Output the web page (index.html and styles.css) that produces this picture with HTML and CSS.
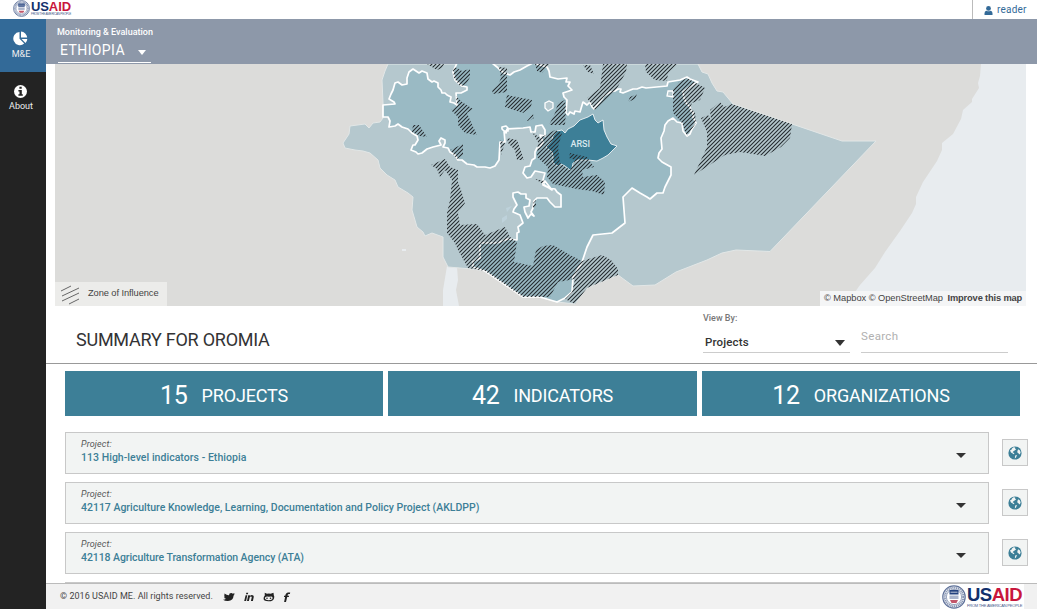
FILE: index.html
```html
<!DOCTYPE html>
<html lang="en">
<head>
<meta charset="utf-8">
<title>USAID Monitoring &amp; Evaluation</title>
<link rel="stylesheet" href="styles.css">
</head>
<body>
<svg class="defs" width="0" height="0" aria-hidden="true">
  <symbol id="globe" viewBox="0 0 14 14">
    <circle cx="7" cy="7" r="6.600" fill="#3d7f97"/>
    <path fill="#f2f4f3" d="M5.600 1.300 7.200 1.500 7 2.600 8.200 3.200 6.600 4.600 5.200 5.400 4.600 6.300 6.500 7.200 5.500 8.300 4.300 7.200 3 6.600 2 4.600 3.600 3.600 4.200 2.200zM10.200 3.200 12 4.400 12.600 6.400 11.800 8.600 10.600 7.400 9.200 6.200 9.600 4.600zM7.200 9.400 9 9 8 11.400 6.800 12.400z"/>
  </symbol>
  <symbol id="seal" viewBox="0 0 24 24">
    <circle cx="12" cy="12" r="11.200" fill="#eef1f6" stroke="#5f7199" stroke-width="1.200"/>
    <circle cx="12" cy="12" r="9.300" fill="none" stroke="#8795b3" stroke-width="2" stroke-dasharray="1.2 .7"/>
    <circle cx="12" cy="12" r="7.600" fill="#fff" stroke="#5f7199" stroke-width=".6"/>
    <path fill="#23427e" d="M7.500 5h9v4.500h-9z"/>
    <path fill="#a9b4cb" d="M7.500 10.500h9v3.500h-9z"/>
    <path fill="#c2566a" d="M8 15h8l-1.500 3h-5z"/>
    <path stroke="#fff" stroke-width=".7" d="M8.500 7.200h7"/>
  </symbol>
</svg>

<header class="topbar">
  <div class="logo logo-top">
    <svg class="logo-seal"><use href="#seal"/></svg>
    <div class="logo-words"><b class="logo-name">US<i>AID</i></b><span class="logo-tag">FROM THE AMERICAN PEOPLE</span></div>
  </div>
  <a class="user">
    <svg class="user-icon" viewBox="0 0 8 9"><circle cx="4" cy="2.400" r="2.400"/><path d="M0 9V7.200Q0 5 2 4.700q2 1.200 4 0 2 .3 2 2.500V9z"/></svg>
    <span class="user-name">reader</span>
  </a>
</header>

<div class="shell">
  <nav class="sidebar">
    <a class="nav-item nav-active">
      <svg class="nav-icon" viewBox="0 0 15 15"><path d="M6.500 1v6.800l4.700 4.800A6.600 6.600 0 1 1 6.500 1z"/><path d="M8 .6a6.500 6.500 0 0 1 6.200 6H8zM8.600 8h5.700a6.500 6.500 0 0 1-1.800 4z"/></svg>
      <span>M&amp;E</span>
    </a>
    <a class="nav-item">
      <svg class="nav-icon" viewBox="0 0 15 15"><circle cx="7.500" cy="7.500" r="6.500"/><path fill="#232323" d="M6.400 2.700h2.300v2H6.400zM5.400 6h3.400v4.200h1v1.600H5.400v-1.600h1.100V7.600H5.400z"/></svg>
      <span>About</span>
    </a>
  </nav>

  <main class="main">
    <div class="country-bar">
      <div class="crumb">Monitoring &amp; Evaluation</div>
      <div class="country"><span class="country-name">ETHIOPIA</span><i class="caret caret-white"></i></div>
    </div>

    <section class="map">
      <svg class="map-art" viewBox="55 64 971 242">
        <defs>
          <pattern id="hatch" width="4" height="4" patternUnits="userSpaceOnUse">
            <path d="M-1 1 1-1M-1 5 5-1M3 5 5 3" stroke="#252c30" stroke-width="1.100"/>
          </pattern>
        </defs>
        <path fill="#dcdcda" d="M55 64h971v242H55z"/>
        <path fill="#e8ecef" d="M981 64 980 76 978 83 979 88 972 99 972 102 963 110 961 119 953 134 942 143 942 150 937 161 923 182 916 197 916 204 912 213 900 231 885 252 875 268 860 285 845 306H1026V64z"/>
        <path fill="#e8ecef" d="M447 266 457 267 458 280 456 290 459 306 443 306 443 290zM402 249h4v2h-4z"/>
        <path fill="#b5c8ce" stroke="#e2e7e7" d="M388 64 385 71 382 80 383 103 383 118 380 122 373 123 369 128 365 124 350 126 349 134 343 143 345 148 355 150 363 151 370 153 378 160 380 168 387 175 395 180 398 187 408 193 413 197 412 210 417 227 423 232 425 236 432 233 443 237 443 257 448 267 472 269 485 271 523 297 540 297 557 302 575 304 587 288 618 275 633 286 655 285 676 272 707 260 722 253 736 250 770 251.500 876 141 842 141 792 124 733 104 723 92 717 91 712 83 708 74 702 72 698 64z"/>
        <path class="oromia" d="M383 105 395 104 394 102 389 99 391 94 393 90 395 83 398 82 402 85 407 84 407 78 409 72 413 69 419 73 422 71 427 73 428 79 432 82 434 81 438 83 438 87 441 90 442 93 445 93 447 95 451 97 450 102 454 103 457 105 456 93 461 93 467 90 467 87 462 86 455 80 453 72 457 63 492 63 497 67 500 70 504 73 510 75 514 72 520 70 527 66 533 63 547 67 549 71 550 77 558 79 567 78 566 82 570 82 568 86 572 90 563 93 564 97 567 100 566 113 568 115 570 112 574 114 575 111 580 112 583 102 587 105 590 102 592 107 594 109 598 104 602 99 604 96 610 92 615 91 618 89 621 89 620 92 623 93 628 91 633 89 637 89 642 87 646 88 667 86 668 82 680 80 687 77 690 79 698 82 692 85 683 92 684 98 686 103 690 107 691 111 693 112 693 117 696 123 692 129 690 134 687 136 683 131 682 123 677 122 673 118 668 121 665 125 664 131 661 138 662 149 659 153 658 158 662 162 671 167 671 175 668 181 665 187 663 193 657 193 650 199 647 197 640 193 632 188 623 197 625 223 612 233 593 235 587 247 582 262 573 277 572 292 565 298 557 302 540 297 523 297 485 271 473 267 473 262 480 258 480 243 497 243 508 239 517 240 517 233 519 232 518 227 523 223 520 215 513 212 514 209 517 205 513 197 513 193 518 192 521 194 526 194 526 198 530 200 529 206 524 207 525 212 526 214 528 218 531 214 534 216 531 212 533 208 534 201 537 198 547 198 550 202 555 207 561 207 561 195 557 192 555 189 549 188 543 185 545 181 552 190 543 184 543 180 545 173 535 171 531 177 527 178 523 173 525 167 530 166 532 160 535 158 535 152 537 148 540 147 543 142 540 135 545 136 545 130 542 125 536 126 535 132 531 132 530 127 523 128 507 129 506 133 502 129 502 127 506 126 508 128 508 131 504 131 505 142 500 142 499 160 495 166 490 168 485 167 477 167 474 165 467 164 462 160 458 160 455 155 450 152 448 148 443 147 445 143 445 140 441 138 439 141 441 145 433 147 427 149 422 153 418 154 416 152 411 150 413 145 415 145 418 140 417 136 412 133 408 129 402 127 398 124 395 126 389 127 390 121 388 117 383 117z"/>
        <path fill="#b5c8ce" stroke="#fff" stroke-width="1.300" d="M545 103l4-2 4 2v5l-5 3-3-3zM668 91l5 0v6l-6-1z"/>
        <path fill="#bed2db" d="M506 208l6-2-5 6zM502 218l5-3v4l-5 4z"/>
        <path fill="#3d7f97" stroke="#fff" stroke-width=".8" d="M593 114 595 120 598 123 603 120 604 130 607 137 611 144 617 146 613 150 608 155 603 158 597 161 588 160 578 160 573 163 572 168 570 170 565 166 561 164 558 166 553 163 553 156 552 152 546 147 549 144 552 140 553 136 557 131 562 130 565 133 568 129 574 126 580 120 588 117z"/>
        <g fill="url(#hatch)">
          <path d="M427 64 444 64 442 68 437 70 432 67zM455 67 462 71 470 69 470 77 466 85 460 86 454 78 453 70zM499 67 507 68 507 92 493 94 492 90 498 85 501 78zM456 96 462 102 473 109 467 113 470 120 477 135 465 133 458 125 458 117 451 110 457 106z"/>
          <path d="M413 125 419 125 427 137 420 136 412 132zM450 150 463 144 463 155 457 159zM507 95 532 100 531 107 523 113 505 107zM527 121 533 114 534 118 529 121zM565 100 566 110 565 125 549 125 555 113 558 103z"/>
          <path d="M431 165 445 159 450 167 458 170 458 182 461 190 465 203 458 213 460 225 477 224 485 235 505 227 510 237 517 242 514 262 533 266 536 250 543 246 553 245 570 255 582 261 602 255 611 260 618 269 618 275 587 288 575 304 565 299 572 292 575 279 558 282 550 297 523 297 485 271 468 268 458 250 455 243 447 233 447 213 450 200 452 180 445 170 440 177 437 169z"/>
          <path d="M603 64 627 64 626 72 616 90 595 110 587 98 600 88zM645 64 677 64 668 73 667 81 655 80 646 72zM583 65 590 65 594 74 588 72zM628 102 630 97 637 94 635 99zM507 138 517 140 524 160 517 160 515 150 508 143zM500 140 505 143 501 155zM533 203 536 200 536 206 533 209zM535 64 550 64 542 73 537 71z"/>
          <path d="M532 132 540 138 555 130 562 133 558 147 560 163 570 170 575 160 569 158 570 153 587 157 594 167 582 170 583 177 597 175 605 182 604 195 592 191 577 189 553 184 547 177 548 167 537 157 538 142zM535 179 545 181 543 184z"/>
          <path d="M679 82 687 78 705 88 700 100 692 103 690 108 695 112 696 123 687 136 682 123 673 113 673 90zM720 102 724 107 732 104 792 124 790 138 781 147 765 156 740 152 725 155 694 175 707 147 707 132 701 118 708 115 711 120 710 110z"/>
        </g>
        <text class="map-label" x="570.500" y="146.500" textLength="19.500">ARSI</text>
      </svg>
      <div class="map-legend">
        <svg class="legend-icon" viewBox="0 0 20 20"><path d="M1 6 11 1M2 11 19 3M2 16 19 8M9 19l10-5" stroke="#666" fill="none"/></svg>
        <span>Zone of Influence</span>
      </div>
      <div class="map-credit"><span>© Mapbox</span> <span>© OpenStreetMap</span> <b>Improve this map</b></div>
    </section>

    <section class="summary">
      <h1 class="summary-title">SUMMARY FOR OROMIA</h1>
      <div class="view-by">
        <label class="view-label">View By:</label>
        <div class="select"><span>Projects</span><i class="caret caret-select"></i></div>
      </div>
      <div class="search">Search</div>
    </section>

    <section class="tabs">
      <div class="tab"><b>15</b><span>PROJECTS</span></div>
      <div class="tab tab-mid"><b>42</b><span>INDICATORS</span></div>
      <div class="tab"><b>12</b><span>ORGANIZATIONS</span></div>
    </section>

    <section class="projects">
      <div class="row">
        <div class="card"><div><div class="kind">Project:</div><div class="name name-wide">113 High-level indicators - Ethiopia</div></div><i class="caret caret-card"></i></div>
        <div class="globe-btn"><svg class="globe"><use href="#globe"/></svg></div>
      </div>
      <div class="row">
        <div class="card"><div><div class="kind">Project:</div><div class="name">42117 Agriculture Knowledge, Learning, Documentation and Policy Project (AKLDPP)</div></div><i class="caret caret-card"></i></div>
        <div class="globe-btn"><svg class="globe"><use href="#globe"/></svg></div>
      </div>
      <div class="row">
        <div class="card"><div><div class="kind">Project:</div><div class="name name-tight">42118 Agriculture Transformation Agency (ATA)</div></div><i class="caret caret-card"></i></div>
        <div class="globe-btn"><svg class="globe"><use href="#globe"/></svg></div>
      </div>
      <div class="row"><div class="card"></div></div>
    </section>

    <footer class="footer">
      <span class="copyright">© 2016 USAID ME. All rights reserved.</span>
      <div class="social">
        <svg width="12" height="10" viewBox="0 0 12 10"><path d="M1.500 1.500Q4 3.500 6 3.300 6 1 8.200 1q1 0 1.600.7L11.700 1l-.9 1.500 1 .1-1.200 1Q10.300 8.800 5 9 2 9.100 0 7.800q2 0 3-1-1.700-.2-2-1.600h1Q.9 4.500 1 3.300l.9.200Q1 2.500 1.500 1.500z"/></svg>
        <svg width="10" height="10" viewBox="0 0 10 10"><path d="M1.600 3.200h1.700L2.100 9H.2zM2.300.7H4.200l-.3 1.600H2zM4.200 3.200h1.700v.7Q6.700 3 7.900 3q2.200 0 1.800 2.200L8.900 9H6.900l.8-3.500q.2-1.100-.7-1.100-1.100 0-1.400 1.300L4.900 9H3z"/></svg>
        <svg width="12" height="10" viewBox="0 0 12 10"><path fill-rule="evenodd" d="M1.700.7 4 1.700q2-.3 3.600 0L10.500.7l.3 2.500q.8 1 .3 3Q10.500 9.400 5.500 9.300 0 9.300.6 6q.2-1.600 1.200-2.600zM3.100 4.700Q1.600 5.300 2 6.800 2.500 8.200 5.600 8.200q3.500 0 3.900-1.600.4-1.800-1.100-2-1.300 0-2.600.1Q4.200 4.500 3.100 4.700z"/><circle cx="4" cy="6.300" r=".8"/><circle cx="7.500" cy="6.300" r=".8"/></svg>
        <svg width="8" height="10" viewBox="0 0 8 10"><path d="M0 3.700h1.200Q1.700.5 4.200.4l2 .1-.3 1.400H4.600Q3.700 1.900 3.500 3.700h1.600L4.800 5H3.200L2 10H.1l1-5H-.2z"/></svg>
      </div>
      <div class="logo logo-foot">
        <svg class="logo-seal"><use href="#seal"/></svg>
        <div class="logo-words"><b class="logo-name">US<i>AID</i></b><span class="logo-tag">FROM THE AMERICAN PEOPLE</span></div>
      </div>
    </footer>
  </main>
</div>
</body>
</html>
```
FILE: styles.css
```css
* { box-sizing: border-box; }
body { margin: 0; width: 1037px; height: 609px; overflow: hidden; display: flex; flex-direction: column; font-family: Roboto, sans-serif; background: #fff; color: #333; }
.defs { position: absolute; }

.topbar { height: 19px; display: flex; justify-content: space-between; flex: none; }
.user { width: 65px; border-left: 1px solid #bbb; display: flex; align-items: center; gap: 4px; padding-left: 11px; color: #336a98; }
.user-icon { width: 9px; height: 9px; fill: #336a98; margin-top: 2px; }
.user-name { font-size: 10px; line-height: 12px; letter-spacing: .2px; white-space: nowrap; margin-top: 1px; }

.logo { display: flex; }
.logo-words { display: flex; flex-direction: column; white-space: nowrap; }
.logo-name { color: #12306c; font-family: "Liberation Sans", sans-serif; }
.logo-name i { font-style: normal; color: #c8173d; }
.logo-tag { color: #45588a; font-family: "Liberation Sans", sans-serif; }
.logo-top { padding-left: 13px; gap: 1px; }
.logo-top .logo-seal { width: 17px; height: 17px; }
.logo-top .logo-name { font-size: 13px; line-height: 13px; letter-spacing: -.1px; }
.logo-top .logo-tag { font-size: 3px; line-height: 3px; letter-spacing: -.2px; }

.shell { display: flex; flex: 1; min-height: 0; }
.sidebar { width: 46px; background: #232323; flex: none; }
.nav-item { height: 53px; display: flex; flex-direction: column; align-items: center; padding: 12px 5px 0 0; color: #eee; font-size: 9px; line-height: 11px; gap: 2px; }
.nav-active span { margin-top: 1px; }
.nav-active { background: #336a98; }
.nav-icon { width: 15px; height: 15px; fill: #fff; }
.nav-item span { padding-left: 1px; }
.main { flex: 1; min-width: 0; display: flex; flex-direction: column; }

.country-bar { height: 45px; flex: none; background: #8d98a9; padding: 7px 0 0 11px; color: #fff; }
.crumb { font-size: 9px; line-height: 12px; font-weight: 500; }
.country { width: 93px; height: 25px; margin-left: 1px; border-bottom: 1px solid #fff; display: flex; align-items: center; justify-content: space-between; padding: 0 5px 0 2px; }
.country-name { font-size: 14px; line-height: 20px; letter-spacing: .4px; }
.caret { width: 0; height: 0; border: 4px solid transparent; border-bottom: 0; border-top: 5px solid #333; }
.caret-white { border-top-color: #fff; margin-top: 5px; }

.map { height: 242px; flex: none; margin: 0 11px 0 9px; position: relative; }
.map-art { display: block; width: 971px; height: 242px; }
.oromia { fill: #9abac4; stroke: #fff; stroke-width: 1.700px; stroke-linejoin: round; }
.map-label { font: 500 9px Roboto, sans-serif; fill: #d8e8ee; }
.map-legend { position: absolute; left: 0; bottom: 0; width: 112px; height: 24px; background: #ececea; display: flex; align-items: center; gap: 8px; padding-left: 5px; font: 9.300px "Liberation Sans", sans-serif; letter-spacing: -.08px; color: #444; white-space: nowrap; }
.legend-icon { width: 20px; height: 20px; margin-top: 2px; }
.map-legend span { margin-top: -2px; }
.map-credit { position: absolute; right: 0; bottom: 0; height: 15px; width: 206px; background: #f4f5f6; padding: 0 4px; font: 9.300px/15px "Liberation Sans", sans-serif; letter-spacing: -.05px; color: #444; white-space: nowrap; }
.map-credit b { margin-left: 2px; letter-spacing: -.15px; }

.summary { height: 58px; flex: none; border-bottom: 1px solid #999; display: flex; padding: 0 29px 0 30px; }
.summary-title { margin: 0; flex: 1; font-size: 18px; font-weight: 400; line-height: 68px; letter-spacing: -.24px; color: #333335; }
.view-by { width: 147px; padding-top: 6px; }
.view-label { display: block; font-size: 9px; line-height: 12px; font-weight: 500; color: #777; }
.select { height: 29px; border-bottom: 1px solid #ccc; display: flex; justify-content: space-between; align-items: center; padding: 7px 5px 0 2px; font-size: 11.500px; font-weight: 500; letter-spacing: .15px; color: #333; }
.caret-select { border-width: 6px 5px 0; margin-top: 2px; }
.search { width: 147px; height: 47px; margin-left: 11px; border-bottom: 1px solid #ccc; padding-top: 23px; font-size: 11.500px; line-height: 15px; color: #b0b0b0; letter-spacing: .35px; }

.tabs { margin: 7px 17px 0 19px; height: 45px; flex: none; display: flex; gap: 5px; }
.tab { width: 318px; background: #3d7f97; color: #fff; display: flex; justify-content: center; align-items: center; gap: 14px; font-size: 18px; letter-spacing: -.18px; padding-top: 4px; }
.tab-mid { width: 309px; }
.tab b { font-weight: 400; font-size: 25px; line-height: 30px; letter-spacing: -.3px; }

.projects { flex: 1; min-height: 0; overflow: hidden; padding: 16px 0 0 19px; display: flex; flex-direction: column; gap: 8px; }
.row { display: flex; gap: 13px; flex: none; height: 42px; }
.card { width: 924px; height: 42px; border: 1px solid #c8c8c8; background: #f2f4f3; padding: 4px 22px 0 15px; display: flex; justify-content: space-between; }
.kind { font-size: 9px; line-height: 14px; font-style: italic; letter-spacing: .15px; color: #555; }
.name { font-size: 10.500px; line-height: 13px; font-weight: 500; color: #3d7f97; white-space: nowrap; }
.name-wide { letter-spacing: .04px; }
.name-tight { letter-spacing: -.07px; }
.caret-card { border-width: 5px 5px 0; margin-top: 16px; }
.globe-btn { width: 26px; height: 27px; margin-top: 7px; border: 1px solid #c8c8c8; background: #f2f4f3; display: flex; align-items: center; justify-content: center; }
.globe { width: 14px; height: 14px; }

.footer { height: 26px; flex: none; border-top: 1px solid #bbb; background: #f1f1f1; display: flex; align-items: center; padding-left: 14px; }
.copyright { font-size: 9px; letter-spacing: .04px; color: #444; width: 163px; padding-bottom: 2px; white-space: nowrap; }
.social { display: flex; gap: 9px; fill: #222; }
.logo-foot { margin-left: auto; margin-right: 13px; width: 84px; height: 25px; background: #fff; padding-left: 2px; gap: 1px; }
.logo-foot .logo-seal { width: 24px; height: 24px; margin-top: 1px; flex: none; }
.logo-foot .logo-words { padding-top: 1px; }
.logo-foot .logo-name { font-size: 18.500px; line-height: 19px; letter-spacing: -.5px; }
.logo-foot .logo-tag { font-size: 4px; line-height: 4px; letter-spacing: -.2px; }
```
